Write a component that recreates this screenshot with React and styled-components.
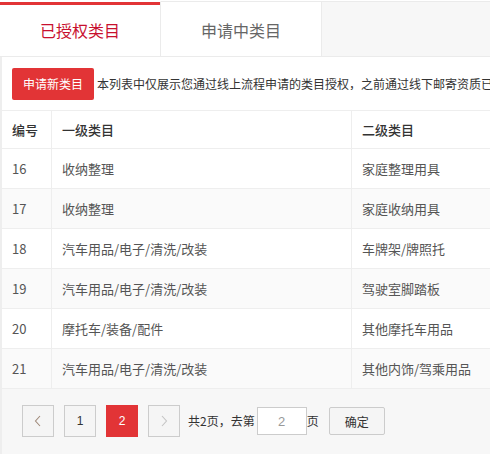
import React from "react";
import styled, { createGlobalStyle } from "styled-components";

const Global = createGlobalStyle`
  html, body { margin: 0; padding: 0; background: #fff; }
  body { font-family: "Noto Sans CJK SC", "Liberation Sans", sans-serif; color: #333; }
  * { box-sizing: border-box; }
`;

const Page = styled.div`
  width: 490px;
  height: 454px;
  overflow: hidden;
  padding-top: 1px;
`;

const TabBar = styled.div`
  display: flex;
  background: #f7f7f7;
  border-top: 1px solid #ebebeb;
  border-bottom: 1px solid #ebebeb;
  height: 56px;
`;

const Tab = styled.div`
  width: 161px;
  display: flex;
  flex-direction: column;
  background: #fff;
  border-right: 1px solid #ebebeb;
  margin-top: ${(p) => (p.$active ? "-1px" : "0")};
  border-top: ${(p) => (p.$active ? "1px solid #fff" : "0")};
  font-size: 16px;
  color: ${(p) => (p.$active ? "#c8102e" : "#666")};
  &::before {
    content: "";
    height: 3px;
    background: ${(p) => (p.$active ? "#e23436" : "transparent")};
  }
`;

const TabLabel = styled.div`
  flex: 1;
  display: flex;
  align-items: center;
  justify-content: center;
  line-height: 1;
  padding-bottom: 2px;
`;

const Content = styled.div`
  border-left: 2px solid #eee;
`;

const Toolbar = styled.div`
  height: 54px;
  display: flex;
  align-items: center;
  padding-left: 10px;
  gap: 3px;
  border-bottom: 1px solid #eee;
  white-space: nowrap;
  overflow: hidden;
`;

const RedButton = styled.button`
  flex: none;
  width: 82px;
  height: 32px;
  border: 0;
  border-radius: 2px;
  background: #e23436;
  color: #fff;
  font-family: inherit;
  font-size: 12px;
  padding: 0;
  cursor: pointer;
`;

const Notice = styled.span`
  font-size: 12px;
  color: #333;
  line-height: 1;
  overflow: hidden;
`;

const Row = styled.div`
  display: grid;
  grid-template-columns: 50px 300px 1fr;
  height: ${(p) => (p.$head ? "38px" : "40px")};
  border-bottom: 1px solid #eee;
  background: ${(p) => (p.$alt ? "#fafafa" : "#fff")};
`;

const Cell = styled.div`
  display: flex;
  align-items: center;
  padding-left: 10px;
  font-size: 13px;
  line-height: 1;
  color: ${(p) => (p.$head ? "#333" : "#555")};
  font-weight: ${(p) => (p.$head ? 500 : 400)};
  white-space: nowrap;
  &:not(:last-child) {
    border-right: 1px solid #eee;
  }
`;

const Pager = styled.div`
  background: #f7f7f7;
  height: 66px;
  display: flex;
  align-items: center;
  padding: 0 0 2px 20px;
  font-size: 12px;
  color: #333;
`;

const PageBtn = styled.div`
  width: 32px;
  height: 32px;
  display: flex;
  align-items: center;
  justify-content: center;
  margin-right: 10px;
  border: 1px solid ${(p) => (p.$active ? "#e23436" : "#ccc")};
  background: ${(p) => (p.$active ? "#e23436" : "#f5f5f5")};
  color: ${(p) => (p.$active ? "#fff" : "#333")};
  font-size: 12px;
  font-family: "Liberation Sans", sans-serif;
`;

const PagerText = styled.span`
  margin-left: -2px;
  line-height: 1;
`;

const PageInput = styled.div`
  width: 50px;
  height: 28px;
  margin: 0 2px;
  border: 1px solid #ccc;
  background: #fff;
  display: flex;
  align-items: center;
  justify-content: center;
  color: #999;
  font-size: 13px;
  font-family: "Liberation Sans", sans-serif;
`;

const ConfirmBtn = styled.div`
  width: 56px;
  height: 28px;
  margin-left: 10px;
  border: 1px solid #ccc;
  border-radius: 2px;
  background: #f5f5f5;
  display: flex;
  align-items: center;
  justify-content: center;
  font-size: 12px;
  color: #333;
`;

const Chevron = ({ dir, color }) => (
  <svg width="10" height="14" viewBox="0 0 10 14">
    <polyline
      points={dir === "left" ? "7,2 2.5,7 7,12" : "3,2 7.5,7 3,12"}
      fill="none"
      stroke={color}
      strokeWidth="1.1"
    />
  </svg>
);

const rows = [
  ["16", "收纳整理", "家庭整理用具"],
  ["17", "收纳整理", "家庭收纳用具"],
  ["18", "汽车用品/电子/清洗/改装", "车牌架/牌照托"],
  ["19", "汽车用品/电子/清洗/改装", "驾驶室脚踏板"],
  ["20", "摩托车/装备/配件", "其他摩托车用品"],
  ["21", "汽车用品/电子/清洗/改装", "其他内饰/驾乘用品"],
];

export default function App() {
  return (
    <Page>
      <Global />
      <TabBar>
        <Tab $active>
          <TabLabel>已授权类目</TabLabel>
        </Tab>
        <Tab>
          <TabLabel>申请中类目</TabLabel>
        </Tab>
      </TabBar>
      <Content>
        <Toolbar>
          <RedButton>申请新类目</RedButton>
          <Notice>本列表中仅展示您通过线上流程申请的类目授权，之前通过线下邮寄资质已获得的类目授权不在此展示</Notice>
        </Toolbar>
        <Row $head>
          <Cell $head>编号</Cell>
          <Cell $head>一级类目</Cell>
          <Cell $head>二级类目</Cell>
        </Row>
        {rows.map((r, i) => (
          <Row key={r[0]} $alt={i % 2 === 1}>
            <Cell>{r[0]}</Cell>
            <Cell>{r[1]}</Cell>
            <Cell>{r[2]}</Cell>
          </Row>
        ))}
        <Pager>
          <PageBtn>
            <Chevron dir="left" color="#a08a7a" />
          </PageBtn>
          <PageBtn>1</PageBtn>
          <PageBtn $active>2</PageBtn>
          <PageBtn>
            <Chevron dir="right" color="#c4c4c4" />
          </PageBtn>
          <PagerText>共2页，去第</PagerText>
          <PageInput>2</PageInput>
          <PagerText>页</PagerText>
          <ConfirmBtn>确定</ConfirmBtn>
        </Pager>
      </Content>
    </Page>
  );
}
